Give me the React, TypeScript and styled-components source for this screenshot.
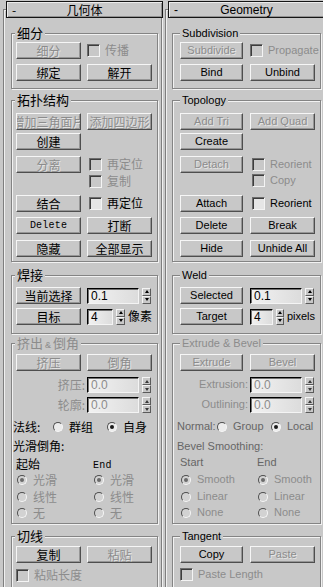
import type { ReactNode } from "react";
import styled, { createGlobalStyle } from "styled-components";

const BG = "#c8c8c8";
const DIS = "#8c8c8c";
const SANS = `"Liberation Sans", Arial, sans-serif`;
const CJK = `"Noto Sans CJK SC", "Liberation Sans", sans-serif`;
const MONO = `"Liberation Mono", "Courier New", monospace`;

// per-language metrics of the rollout (the two screenshots differ by a few px)
type Lay = {
  font: string;
  size: number;
  legend: number;
  lx: number;
  gl: number;
  gw: number;
  pl: number;
  c1: number;
  gap: number;
  c2: number;
  sub: string;
};

const ZH: Lay = { font: CJK, size: 12, legend: 13, lx: -1, gl: 7, gw: 147, pl: 4, c1: 65, gap: 6, c2: 65, sub: "#000" };
const EN: Lay = { font: SANS, size: 11, legend: 11, lx: 0, gl: 6, gw: 149, pl: 7, c1: 63, gap: 7, c2: 65, sub: "#666" };

type Texts = Record<string, ReactNode>;

const GlobalStyle = createGlobalStyle`
  html, body {
    margin: 0;
    padding: 0;
    background: ${BG};
    overflow: hidden;
  }
  body {
    width: 323px;
    height: 587px;
  }
`;

const Page = styled.div`
  display: flex;
  width: 323px;
  height: 587px;
  overflow: hidden;
  background: ${BG};
`;

const PanelBox = styled.div<{ $l: Lay }>`
  width: 162px;
  flex: none;
  font-family: ${(p) => p.$l.font};
  font-size: ${(p) => p.$l.size}px;
  color: #000;
  line-height: 1.2;
`;

const Frame = styled.div`
  margin: 9px 0 0 3px;
  width: 159px;
  height: 640px;
  box-sizing: border-box;
  border: 1px solid #7e7e7e;
  box-shadow: inset 1px 1px 0 #f0f0f0, 1px 1px 0 #f0f0f0;
`;

const Header = styled.div`
  margin: -9px -2px 0 2px;
  height: 17px;
  box-sizing: border-box;
  padding: 0 5px;
  border: 1px solid #151515;
  box-shadow: inset 1px 1px 0 #ececec, inset -1px -1px 0 #929292;
  background: ${BG};
  display: grid;
  grid-template-columns: 1fr auto 1fr;
  align-items: center;
  line-height: 14px;
  font-size: 12px;
`;

const Group = styled.div<{ $l: Lay; $mt: number; $pb: number }>`
  margin: ${(p) => p.$mt}px 0 0 ${(p) => p.$l.gl}px;
  width: ${(p) => p.$l.gw}px;
  box-sizing: border-box;
  padding: 0 0 ${(p) => p.$pb}px ${(p) => p.$l.pl}px;
  border: 1px solid #848484;
  box-shadow: inset 1px 1px 0 #f2f2f2, 1px 1px 0 #f2f2f2;
`;

const Legend = styled.div<{ $l: Lay; $dis?: boolean }>`
  width: fit-content;
  margin: -8px 0 0 ${(p) => p.$l.lx}px;
  padding: 0 2px;
  height: 14px;
  line-height: 14px;
  font-size: ${(p) => p.$l.legend}px;
  background: ${BG};
  color: ${(p) => (p.$dis ? DIS : "#000")};
  white-space: nowrap;
`;

const Amp = styled.span`
  font-family: ${SANS};
  font-size: 9px;
  margin: 0 2px;
`;

const Row = styled.div<{ $l: Lay; $mt: number; $h?: number }>`
  display: grid;
  grid-template-columns: ${(p) => p.$l.c1}px ${(p) => p.$l.c2}px;
  column-gap: ${(p) => p.$l.gap}px;
  height: ${(p) => p.$h ?? 17}px;
  margin-top: ${(p) => p.$mt}px;
  align-items: center;
`;

const Button = styled.button<{ $dis?: boolean }>`
  appearance: none;
  margin: 0;
  padding: 0;
  font: inherit;
  line-height: 1;
  height: 17px;
  box-sizing: border-box;
  border: 1px solid;
  border-color: #f6f6f6 #4e4e4e #4e4e4e #f6f6f6;
  box-shadow: inset -1px -1px 0 #969696;
  background: ${BG};
  color: ${(p) => (p.$dis ? DIS : "#000")};
  text-shadow: ${(p) => (p.$dis ? "1px 1px 0 rgba(255,255,255,0.55)" : "none")};
  display: flex;
  align-items: center;
  justify-content: center;
  overflow: hidden;
  white-space: nowrap;
`;

const Mono = styled.span`
  font-family: ${MONO};
  font-size: 10px;
  letter-spacing: 0.2px;
`;

const Check = styled.label<{ $dis?: boolean; $ml?: number }>`
  display: flex;
  align-items: center;
  gap: 5px;
  margin-left: ${(p) => p.$ml ?? 0}px;
  color: ${(p) => (p.$dis ? DIS : "#000")};
  white-space: nowrap;
`;

const CheckBox = styled.span<{ $on?: boolean }>`
  flex: none;
  width: 13px;
  height: 13px;
  box-sizing: border-box;
  border: 1px solid;
  border-color: #6c6c6c #f4f4f4 #f4f4f4 #6c6c6c;
  box-shadow: inset 1px 1px 0 #3c3c3c;
  background: ${(p) => (p.$on ? "#e6e6e6" : BG)};
`;

const Spin = styled.div`
  display: flex;
  align-items: center;
  gap: 3px;
  white-space: nowrap;
`;

const Field = styled.div<{ $w: number; $dis?: boolean }>`
  width: ${(p) => p.$w}px;
  height: 16px;
  box-sizing: border-box;
  padding-left: 3px;
  border: 1px solid;
  border-color: #000 #f4f4f4 #f4f4f4 #000;
  box-shadow: inset 1px 1px 0 #707070;
  background: linear-gradient(to right, #f2f2f2, #dcdcdc);
  font-family: ${SANS};
  font-size: 12px;
  line-height: 14px;
  color: ${(p) => (p.$dis ? DIS : "#000")};
`;

const Arrows = styled.div`
  width: 9px;
  height: 16px;
  display: grid;
  grid-template-rows: 1fr 1fr;
`;

const Arrow = styled.span<{ $up?: boolean; $dis?: boolean }>`
  box-sizing: border-box;
  border: 1px solid;
  border-color: #f4f4f4 #5a5a5a #5a5a5a #f4f4f4;
  background: ${BG};
  display: grid;
  place-items: center;
  &::after {
    content: "";
    width: 0;
    height: 0;
    border-left: 2.5px solid transparent;
    border-right: 2.5px solid transparent;
    ${(p) => (p.$up ? "border-bottom" : "border-top")}: 3px solid
      ${(p) => (p.$dis ? "#3a3a3a" : "#000")};
  }
`;

const SpinRow = styled.div<{ $mt: number }>`
  display: flex;
  align-items: center;
  height: 16px;
  margin-top: ${(p) => p.$mt}px;
`;

const SpinLabel = styled.span<{ $l: Lay; $dis?: boolean }>`
  width: ${(p) => p.$l.c1 + p.$l.gap - 2}px;
  margin-right: 2px;
  text-align: right;
  white-space: nowrap;
  color: ${(p) => (p.$dis ? DIS : "#000")};
`;

const TextLine = styled.div<{ $mt: number; $color: string }>`
  height: 14px;
  line-height: 14px;
  margin: ${(p) => p.$mt}px 0 0 -3px;
  color: ${(p) => p.$color};
  white-space: nowrap;
`;

const NormalRow = styled.div<{ $color: string }>`
  display: grid;
  grid-template-columns: 36px 54px auto;
  align-items: center;
  height: 14px;
  margin-top: 7px;
  color: ${(p) => p.$color};
  white-space: nowrap;
`;

const NormalLabel = styled.span`
  margin-left: -3px;
`;

const SmoothRow = styled.div<{ $mt: number; $color: string }>`
  display: grid;
  grid-template-columns: 77px auto;
  align-items: center;
  height: 14px;
  margin-top: ${(p) => p.$mt}px;
  color: ${(p) => p.$color};
  white-space: nowrap;
`;

const Option = styled.label`
  display: flex;
  align-items: center;
  gap: 6px;
  margin-left: 1px;
`;

const Radio = styled.span<{ $on?: boolean; $dis?: boolean }>`
  flex: none;
  width: 10px;
  height: 10px;
  box-sizing: border-box;
  border-radius: 50%;
  border: 1px solid;
  border-color: #4e4e4e #f6f6f6 #f6f6f6 #4e4e4e;
  background: ${(p) => (p.$dis ? "#d2d2d2" : "#ececec")};
  display: grid;
  place-items: center;
  &::after {
    content: "";
    width: 4px;
    height: 4px;
    border-radius: 50%;
    background: ${(p) => (p.$on ? (p.$dis ? "#6a6a6a" : "#1a1a1a") : "transparent")};
  }
`;

const Spinner = ({ w, value, dis }: { w: number; value: string; dis?: boolean }) => (
  <>
    <Field $w={w} $dis={dis}>
      {value}
    </Field>
    <Arrows>
      <Arrow $up $dis={dis} />
      <Arrow $dis={dis} />
    </Arrows>
  </>
);

const Panel = ({ l, t }: { l: Lay; t: Texts }) => (
  <PanelBox $l={l}>
    <Frame>
      <Header>
        <span>-</span>
        <span>{t.title}</span>
        <span />
      </Header>

      <Group $l={l} $mt={15} $pb={7}>
        <Legend $l={l}>{t.subdivision}</Legend>
        <Row $l={l} $mt={2}>
          <Button $dis>{t.subdivide}</Button>
          <Check $dis>
            <CheckBox />
            {t.propagate}
          </Check>
        </Row>
        <Row $l={l} $mt={5}>
          <Button>{t.bind}</Button>
          <Button>{t.unbind}</Button>
        </Row>
      </Group>

      <Group $l={l} $mt={11} $pb={4}>
        <Legend $l={l}>{t.topology}</Legend>
        <Row $l={l} $mt={6}>
          <Button $dis>{t.addTri}</Button>
          <Button $dis>{t.addQuad}</Button>
        </Row>
        <Row $l={l} $mt={3}>
          <Button>{t.create}</Button>
        </Row>
        <Row $l={l} $mt={6}>
          <Button $dis>{t.detach}</Button>
          <Check $dis $ml={2}>
            <CheckBox />
            {t.reorient}
          </Check>
        </Row>
        <Row $l={l} $mt={1} $h={13}>
          <span />
          <Check $dis $ml={2}>
            <CheckBox />
            {t.copyDetach}
          </Check>
        </Row>
        <Row $l={l} $mt={8}>
          <Button>{t.attach}</Button>
          <Check $ml={2}>
            <CheckBox $on />
            {t.reorient}
          </Check>
        </Row>
        <Row $l={l} $mt={5}>
          <Button>{t.delete}</Button>
          <Button>{t.break}</Button>
        </Row>
        <Row $l={l} $mt={6}>
          <Button>{t.hide}</Button>
          <Button>{t.unhideAll}</Button>
        </Row>
      </Group>

      <Group $l={l} $mt={13} $pb={8}>
        <Legend $l={l}>{t.weld}</Legend>
        <Row $l={l} $mt={5}>
          <Button>{t.selected}</Button>
          <Spin>
            <Spinner w={52} value="0.1" />
          </Spin>
        </Row>
        <Row $l={l} $mt={4}>
          <Button>{t.target}</Button>
          <Spin>
            <Spinner w={27} value="4" />
            <span>{t.pixels}</span>
          </Spin>
        </Row>
      </Group>

      <Group $l={l} $mt={9} $pb={3}>
        <Legend $l={l} $dis>
          {t.extrudeBevel}
        </Legend>
        <Row $l={l} $mt={4}>
          <Button $dis>{t.extrude}</Button>
          <Button $dis>{t.bevel}</Button>
        </Row>
        <SpinRow $mt={6}>
          <SpinLabel $l={l} $dis>
            {t.extrusion}
          </SpinLabel>
          <Spin>
            <Spinner w={52} value="0.0" dis />
          </Spin>
        </SpinRow>
        <SpinRow $mt={4}>
          <SpinLabel $l={l} $dis>
            {t.outlining}
          </SpinLabel>
          <Spin>
            <Spinner w={52} value="0.0" dis />
          </Spin>
        </SpinRow>
        <NormalRow $color={l.sub}>
          <NormalLabel>{t.normal}</NormalLabel>
          <Option>
            <Radio />
            {t.group}
          </Option>
          <Option>
            <Radio $on />
            {t.local}
          </Option>
        </NormalRow>
        <TextLine $mt={5} $color={l.sub}>
          {t.bevelSmoothing}
        </TextLine>
        <SmoothRow $mt={3} $color={l.sub}>
          <span>{t.start}</span>
          <span>{t.end}</span>
        </SmoothRow>
        {[t.smooth, t.linear, t.none].map((name, i) => (
          <SmoothRow key={i} $mt={i === 2 ? 2 : 3} $color={DIS}>
            <Option>
              <Radio $dis $on={i === 0} />
              {name}
            </Option>
            <Option>
              <Radio $dis $on={i === 0} />
              {name}
            </Option>
          </SmoothRow>
        ))}
      </Group>

      <Group $l={l} $mt={12} $pb={20}>
        <Legend $l={l}>{t.tangent}</Legend>
        <Row $l={l} $mt={3}>
          <Button>{t.copy}</Button>
          <Button $dis>{t.paste}</Button>
        </Row>
        <Row $l={l} $mt={5} $h={13}>
          <Check $dis>
            <CheckBox />
            {t.pasteLength}
          </Check>
        </Row>
      </Group>
    </Frame>
  </PanelBox>
);

const zhTexts: Texts = {
  title: "几何体",
  subdivision: "细分",
  subdivide: "细分",
  propagate: "传播",
  bind: "绑定",
  unbind: "解开",
  topology: "拓扑结构",
  addTri: "增加三角面片",
  addQuad: "添加四边形",
  create: "创建",
  detach: "分离",
  reorient: "再定位",
  copyDetach: "复制",
  attach: "结合",
  delete: <Mono>Delete</Mono>,
  break: "打断",
  hide: "隐藏",
  unhideAll: "全部显示",
  weld: "焊接",
  selected: "当前选择",
  target: "目标",
  pixels: "像素",
  extrudeBevel: (
    <>
      挤出<Amp>&amp;</Amp>倒角
    </>
  ),
  extrude: "挤压",
  bevel: "倒角",
  extrusion: "挤压:",
  outlining: "轮廓:",
  normal: "法线:",
  group: "群组",
  local: "自身",
  bevelSmoothing: "光滑倒角:",
  start: "起始",
  end: <Mono>End</Mono>,
  smooth: "光滑",
  linear: "线性",
  none: "无",
  tangent: "切线",
  copy: "复制",
  paste: "粘贴",
  pasteLength: "粘贴长度",
};

const enTexts: Texts = {
  title: "Geometry",
  subdivision: "Subdivision",
  subdivide: "Subdivide",
  propagate: "Propagate",
  bind: "Bind",
  unbind: "Unbind",
  topology: "Topology",
  addTri: "Add Tri",
  addQuad: "Add Quad",
  create: "Create",
  detach: "Detach",
  reorient: "Reorient",
  copyDetach: "Copy",
  attach: "Attach",
  delete: "Delete",
  break: "Break",
  hide: "Hide",
  unhideAll: "Unhide All",
  weld: "Weld",
  selected: "Selected",
  target: "Target",
  pixels: "pixels",
  extrudeBevel: "Extrude & Bevel",
  extrude: "Extrude",
  bevel: "Bevel",
  extrusion: "Extrusion:",
  outlining: "Outlining:",
  normal: "Normal:",
  group: "Group",
  local: "Local",
  bevelSmoothing: "Bevel Smoothing:",
  start: "Start",
  end: "End",
  smooth: "Smooth",
  linear: "Linear",
  none: "None",
  tangent: "Tangent",
  copy: "Copy",
  paste: "Paste",
  pasteLength: "Paste Length",
};

export default function App() {
  return (
    <>
      <GlobalStyle />
      <Page>
        <Panel l={ZH} t={zhTexts} />
        <Panel l={EN} t={enTexts} />
      </Page>
    </>
  );
}
